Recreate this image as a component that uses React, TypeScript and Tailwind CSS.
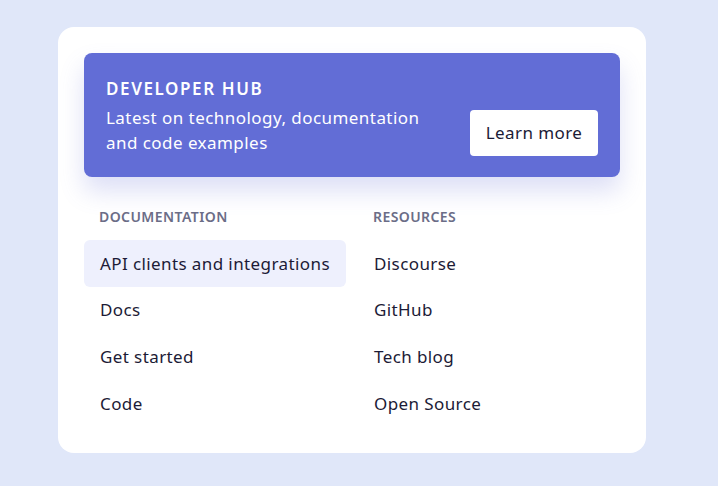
import React from 'react';

const documentation = ['API clients and integrations', 'Docs', 'Get started', 'Code'];
const resources = ['Discourse', 'GitHub', 'Tech blog', 'Open Source'];

function LinkColumn({ title, links, active }: { title: string; links: string[]; active?: number }) {
  return (
    <div className="flex flex-col">
      <h3 className="mb-[15px] px-[15px] text-[14px] leading-4 font-semibold tracking-[0.03em] text-[#6b6d87]">
        {title}
      </h3>
      <ul className="flex flex-col">
        {links.map((link, i) => (
          <li
            key={link}
            className={
              i === active
                ? 'flex h-[46.67px] items-center rounded-md bg-[#eef0fd] px-4 text-[17px] tracking-[0.4px] text-[#1c1b36]'
                : 'flex h-[46.67px] items-center rounded-md px-4 text-[17px] tracking-[0.4px] text-[#1c1b36]'
            }
          >
            {link}
          </li>
        ))}
      </ul>
    </div>
  );
}

export default function App() {
  return (
    <div
      className="flex min-h-[486px] w-full items-start bg-[#e0e7f9] pt-[27px] pl-[58px]"
      style={{ fontFamily: '"Noto Sans", sans-serif' }}
    >
      <div className="w-[588px] rounded-2xl bg-white p-[26px]">
        {/* Banner */}
        <div className="flex h-[124px] justify-between rounded-lg bg-[#626dd6] px-[22px] shadow-[0_14px_24px_rgba(98,109,214,0.22)]">
          <div className="text-white">
            <h2 className="mt-[26px] text-[17px] leading-5 font-semibold tracking-[1.6px]">DEVELOPER HUB</h2>
            <p className="mt-[6px] text-[17px] leading-[25px] tracking-[0.45px]">
              Latest on technology, documentation
              <br />
              and code examples
            </p>
          </div>
          <button className="mt-[57px] h-[46px] w-[128px] rounded bg-white text-[17px] tracking-[0.4px] text-[#1c1b36]">
            Learn more
          </button>
        </div>

        {/* Links */}
        <div className="mt-[32px] grid grid-cols-2 gap-3">
          <LinkColumn title="DOCUMENTATION" links={documentation} active={0} />
          <LinkColumn title="RESOURCES" links={resources} />
        </div>
      </div>
    </div>
  );
}
